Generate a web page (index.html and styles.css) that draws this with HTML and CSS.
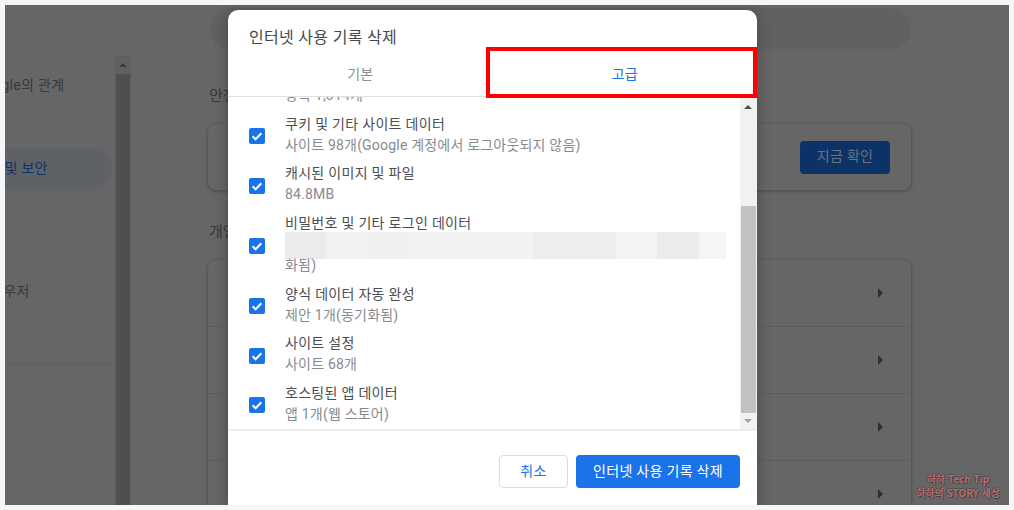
FILE: index.html
```html
<!DOCTYPE html>
<html lang="ko">
<head>
<meta charset="utf-8">
<title>인터넷 사용 기록 삭제</title>
<link rel="stylesheet" href="styles.css">
</head>
<body>
<div class="screen">
  <div class="backdrop">
    <nav class="side">
      <div class="side-item side-first">Google의 관계</div>
      <div class="side-item side-active">개인정보 및 보안</div>
      <div class="side-item side-third">웹 브라우저</div>
      <div class="side-rule"></div>
    </nav>
    <div class="side-bar"><div class="side-up"></div></div>
    <main class="main">
      <div class="search"></div>
      <h2 class="head head-safe">안전 확인</h2>
      <section class="card card-safe">
        <button class="check-now">지금 확인</button>
      </section>
      <h2 class="head head-priv">개인정보 및 보안</h2>
      <section class="card card-priv">
        <div class="card-row"><span class="tri"></span></div>
        <div class="card-row"><span class="tri"></span></div>
        <div class="card-row"><span class="tri"></span></div>
        <div class="card-row"><span class="tri"></span></div>
      </section>
    </main>
  </div>

  <div class="dialog">
    <div class="title">인터넷 사용 기록 삭제</div>
    <div class="tabs">
      <div class="tab">기본</div>
      <div class="tab tab-on">고급</div>
    </div>
    <div class="body">
      <div class="list">
        <div class="row row-cut">
          <div class="text"><div class="t">검색 기록</div><div class="s">항목 1,014개</div></div>
        </div>
        <div class="row">
          <span class="box"><svg viewBox="0 0 16 16" class="tick"><path d="M3.6 8.2l3 3 5.8-6" /></svg></span>
          <div class="text"><div class="t">쿠키 및 기타 사이트 데이터</div><div class="s">사이트 98개(Google 계정에서 로그아웃되지 않음)</div></div>
        </div>
        <div class="row">
          <span class="box"><svg viewBox="0 0 16 16" class="tick"><path d="M3.6 8.2l3 3 5.8-6" /></svg></span>
          <div class="text"><div class="t">캐시된 이미지 및 파일</div><div class="s">84.8MB</div></div>
        </div>
        <div class="row">
          <span class="box"><svg viewBox="0 0 16 16" class="tick"><path d="M3.6 8.2l3 3 5.8-6" /></svg></span>
          <div class="text">
            <div class="t">비밀번호 및 기타 로그인 데이터</div>
            <div class="blur">
              <i class="b1"></i><i class="b2"></i><i class="b3"></i><i class="b4"></i><i class="b5"></i><i class="b6"></i><i class="b7"></i><i class="b8"></i><i class="b9"></i>
            </div>
            <div class="s s-after">화됨)</div>
          </div>
        </div>
        <div class="row">
          <span class="box"><svg viewBox="0 0 16 16" class="tick"><path d="M3.6 8.2l3 3 5.8-6" /></svg></span>
          <div class="text"><div class="t">양식 데이터 자동 완성</div><div class="s">제안 1개(동기화됨)</div></div>
        </div>
        <div class="row">
          <span class="box"><svg viewBox="0 0 16 16" class="tick"><path d="M3.6 8.2l3 3 5.8-6" /></svg></span>
          <div class="text"><div class="t">사이트 설정</div><div class="s">사이트 68개</div></div>
        </div>
        <div class="row">
          <span class="box"><svg viewBox="0 0 16 16" class="tick"><path d="M3.6 8.2l3 3 5.8-6" /></svg></span>
          <div class="text"><div class="t">호스팅된 앱 데이터</div><div class="s">앱 1개(웹 스토어)</div></div>
        </div>
      </div>
      <div class="scroll">
        <div class="arrow-up"></div>
        <div class="thumb"></div>
        <div class="arrow-down"></div>
      </div>
    </div>
    <div class="foot">
      <button class="btn btn-cancel">취소</button>
      <button class="btn btn-del">인터넷 사용 기록 삭제</button>
    </div>
  </div>

  <div class="mark"></div>
  <div class="stamp"><div>하하 Tech Tip</div><div>하하의 STORY 세상</div></div>
</div>
</body>
</html>
```
FILE: styles.css
```css
* { box-sizing: border-box; }
html, body { margin: 0; height: 100%; }
body {
  background: #f6f6f6;
  padding: 5px;
  font-family: Roboto, "Noto Sans CJK KR", sans-serif;
  overflow: hidden;
}
.screen {
  position: relative;
  width: 1004px;
  height: 500px;
  overflow: hidden;
  background: #666;
}

/* dimmed page */
.backdrop { display: flex; height: 100%; color: #37393c; }
.side { width: 111px; overflow: hidden; display: flex; flex-direction: column; flex: none; }
.side-item { font-size: 14px; letter-spacing: .3px; line-height: 20px; white-space: nowrap; }
.side-first { margin-top: 70px; margin-left: -30px; }
.side-active {
  margin-top: 53px;
  height: 41px;
  line-height: 41px;
  width: 107px;
  background: #5e6165;
  border-radius: 0 21px 21px 0;
  color: #0e3467;
  text-indent: -57px;
  white-space: nowrap;
  overflow: hidden;
}
.side-third { margin-top: 92px; margin-left: -45px; }
.side-rule { margin-top: 62px; height: 1px; background: #5e5e5e; }
.side-bar {
  width: 14px;
  flex: none;
  background: #4e4f51;
  position: relative;
  margin-top: 52px;
  box-shadow: 0 0 0 1px #5f5f60;
}
.side-up { height: 17px; background: #606162; position: relative; }
.side-up::after {
  content: "";
  position: absolute;
  left: 3px;
  top: 6px;
  border: 4px solid transparent;
  border-top: 0;
  border-bottom-color: #3a3b3d;
}
.main { flex: 1; padding: 3px 98px 0 78px; display: flex; flex-direction: column; min-width: 0; }
.search { height: 41px; border-radius: 21px; background: #5f6163; flex: none; margin-left: 2px; }
.head { margin: 37px 0 0 1px; font-size: 15px; line-height: 20px; font-weight: 400; white-space: nowrap; color: #37393c; }
.head-priv { margin-top: 32px; }
.card {
  border-radius: 8px;
  background: #666;
  box-shadow: 0 1px 3px 1px rgba(40, 42, 46, .35);
}
.card-safe { margin-top: 18px; height: 66px; display: flex; justify-content: flex-end; align-items: center; padding-right: 21px; flex: none; }
.check-now {
  width: 90px;
  height: 33px;
  border: 0;
  border-radius: 4px;
  background: #0d3267;
  color: #6b7480;
  font: 14px Roboto, "Noto Sans CJK KR", sans-serif;
  letter-spacing: .3px;
  padding: 0 0 4px;
}
.card-priv { margin-top: 18px; flex: 1; min-height: 300px; }
.card-row {
  height: 67px;
  padding-right: 28px;
  display: flex;
  align-items: center;
  justify-content: flex-end;
  border-bottom: 1px solid #5d5d5d;
}
.tri {
  border: 5px solid transparent;
  border-right: 0;
  border-left-color: #2e2f31;
}

/* dialog */
.dialog {
  position: absolute;
  left: 223px;
  top: 5px;
  width: 529px;
  height: 500px;
  background: #fff;
  border-radius: 10px 10px 0 0;
  box-shadow: 0 2px 14px rgba(40, 42, 46, .45);
  display: flex;
  flex-direction: column;
}
.title {
  padding: 18px 0 0 21px;
  height: 45px;
  font-size: 16px;
  line-height: 20px;
  color: #45484b;
  letter-spacing: .3px;
  flex: none;
}
.tabs { display: flex; height: 42px; border-bottom: 1px solid #dfe1e5; flex: none; }
.tab { width: 50%; text-align: center; font-size: 14px; line-height: 38px; color: #8a8f94; }
.tab-on { color: #1a73e8; }
.body { display: flex; height: 334px; border-bottom: 2px solid #eee; flex: none; }
.list { flex: 1; overflow: hidden; padding-left: 21px; min-width: 0; }
.row { display: flex; align-items: center; gap: 20px; padding: 4px 0 3.5px; }
.row-cut { margin-top: -37px; padding-left: 36px; }
.box {
  width: 16px;
  height: 16px;
  margin-top: 3.5px;
  border-radius: 2px;
  background: #1a73e8;
  flex: none;
  display: flex;
}
.tick { width: 16px; height: 16px; fill: none; stroke: #fff; stroke-width: 2; }
.text { flex: 1; min-width: 0; }
.t { font-size: 14px; letter-spacing: .3px; line-height: 21px; color: #4a4e52; white-space: nowrap; }
.s { font-size: 14px; letter-spacing: .2px; line-height: 21px; color: #868b90; white-space: nowrap; }
.s-after { margin-top: -4px; }
.blur { display: flex; height: 27px; width: 441px; margin-top: -1.5px; }
.blur i { display: block; height: 100%; }
.b1 { width: 41px; background: #ebebeb; }
.b2 { width: 42px; background: #f2f2f2; }
.b3 { width: 41px; background: #efefef; }
.b4 { width: 83px; background: #f2f2f2; }
.b5 { width: 41px; background: #f2f2f2; }
.b6 { width: 83px; background: #ededed; }
.b7 { width: 41px; background: #f3f3f3; }
.b8 { width: 42px; background: #ebebeb; }
.b9 { width: 27px; background: #f6f6f6; }
.scroll { width: 17px; flex: none; background: #f1f1f1; position: relative; }
.arrow-up {
  position: absolute;
  left: 4px;
  top: 8px;
  border: 4px solid transparent;
  border-top: 0;
  border-bottom-color: #505050;
}
.thumb { position: absolute; left: 1px; right: 1px; top: 109px; height: 207px; background: #c1c1c1; }
.arrow-down {
  position: absolute;
  left: 4px;
  bottom: 6px;
  border: 4px solid transparent;
  border-bottom: 0;
  border-top-color: #a3a3a3;
}
.foot { flex: 1; display: flex; justify-content: flex-end; gap: 8px; padding: 24px 17px 0 0; }
.btn {
  height: 33px;
  border-radius: 4px;
  font: 14px Roboto, "Noto Sans CJK KR", sans-serif;
  letter-spacing: .3px;
  padding: 0 0 3px;
}
.btn-cancel { width: 69px; background: #fff; border: 1px solid #dadce0; color: #1a73e8; }
.btn-del { width: 164px; background: #1a73e8; border: 0; color: #fff; }

/* annotation overlays */
.mark {
  position: absolute;
  left: 481px;
  top: 42px;
  width: 271px;
  height: 51px;
  border: 4px solid #f00;
}
.stamp {
  position: absolute;
  right: 6px;
  top: 467px;
  width: 90px;
  text-align: center;
  font-size: 10px;
  line-height: 14px;
  font-weight: 700;
  font-family: "Noto Sans CJK KR", sans-serif;
  color: #b86a6c;
  text-shadow: 1px 1px 0 #454545, -1px 0 0 #505050, 0 -1px 0 #505050;
  white-space: nowrap;
}
```
